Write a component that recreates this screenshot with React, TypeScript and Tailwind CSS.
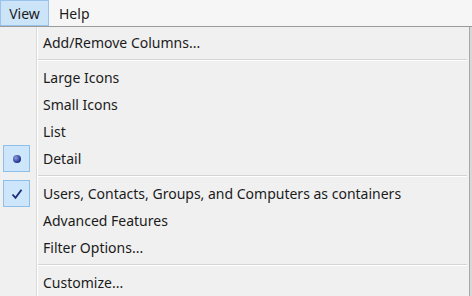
import React from "react";

type Item =
  | { kind: "sep" }
  | { kind: "item"; label: string; mark?: "radio" | "check" };

const items: Item[] = [
  { kind: "item", label: "Add/Remove Columns..." },
  { kind: "sep" },
  { kind: "item", label: "Large Icons" },
  { kind: "item", label: "Small Icons" },
  { kind: "item", label: "List" },
  { kind: "item", label: "Detail", mark: "radio" },
  { kind: "sep" },
  { kind: "item", label: "Users, Contacts, Groups, and Computers as containers", mark: "check" },
  { kind: "item", label: "Advanced Features" },
  { kind: "item", label: "Filter Options..." },
  { kind: "sep" },
  { kind: "item", label: "Customize..." },
];

const Mark = ({ mark }: { mark: "radio" | "check" }) => (
  <div className="w-[27px] h-[27px] ml-[3px] bg-[#cde6fb] border border-[#8dbfe9] flex items-center justify-center">
    {mark === "radio" ? (
      <div className="w-[8px] h-[8px] rounded-full bg-[radial-gradient(circle_at_35%_35%,#8a9fe0,#1f2f8f_70%)]" />
    ) : (
      <svg width="12" height="12" viewBox="0 0 12 12">
        <path d="M1.5 6.5 L4.5 9.8 L10.5 1.8" fill="none" stroke="#1b2a7a" strokeWidth="1.8" />
      </svg>
    )}
  </div>
);

export default function App() {
  return (
    <div
      className="w-[472px] h-[296px] overflow-hidden bg-[#f0f0f0] text-[#1b1b1b] flex flex-col"
      style={{ fontFamily: '"Noto Sans", "Open Sans", sans-serif' }}
    >
      <div className="h-[27px] shrink-0 bg-[#f6f6f6] border-b border-[#9a9a9a] flex text-[14px]">
        <div className="w-[49px] h-[26px] bg-[#cce4f7] border border-[#99c3e8] flex items-center justify-center">
          View
        </div>
        <div className="px-[10px] flex items-center">Help</div>
      </div>
      <div className="flex-1 relative flex">
        <div className="w-[470px] border-r border-[#a8a8a8] pt-[2px] flex flex-col relative">
          <div className="absolute left-[36px] top-0 bottom-0 w-[1px] bg-[#dadada]" />
          <div className="absolute left-[37px] top-0 bottom-0 w-[1px] bg-white" />
          {items.map((it, i) =>
            it.kind === "sep" ? (
              <div key={i} className="h-[8px] flex flex-col justify-center pl-[37px] pr-[2px]">
                <div className="h-[1px] bg-[#d4d4d4]" />
                <div className="h-[1px] bg-white" />
              </div>
            ) : (
              <div key={i} className="h-[27px] flex items-center text-[14px]">
                <div className="w-[43px] shrink-0 flex items-center">
                  {it.mark && <Mark mark={it.mark} />}
                </div>
                <span className="whitespace-nowrap">{it.label}</span>
              </div>
            )
          )}
        </div>
        <div className="w-[2px] bg-[#d8d8d8]" />
      </div>
    </div>
  );
}
